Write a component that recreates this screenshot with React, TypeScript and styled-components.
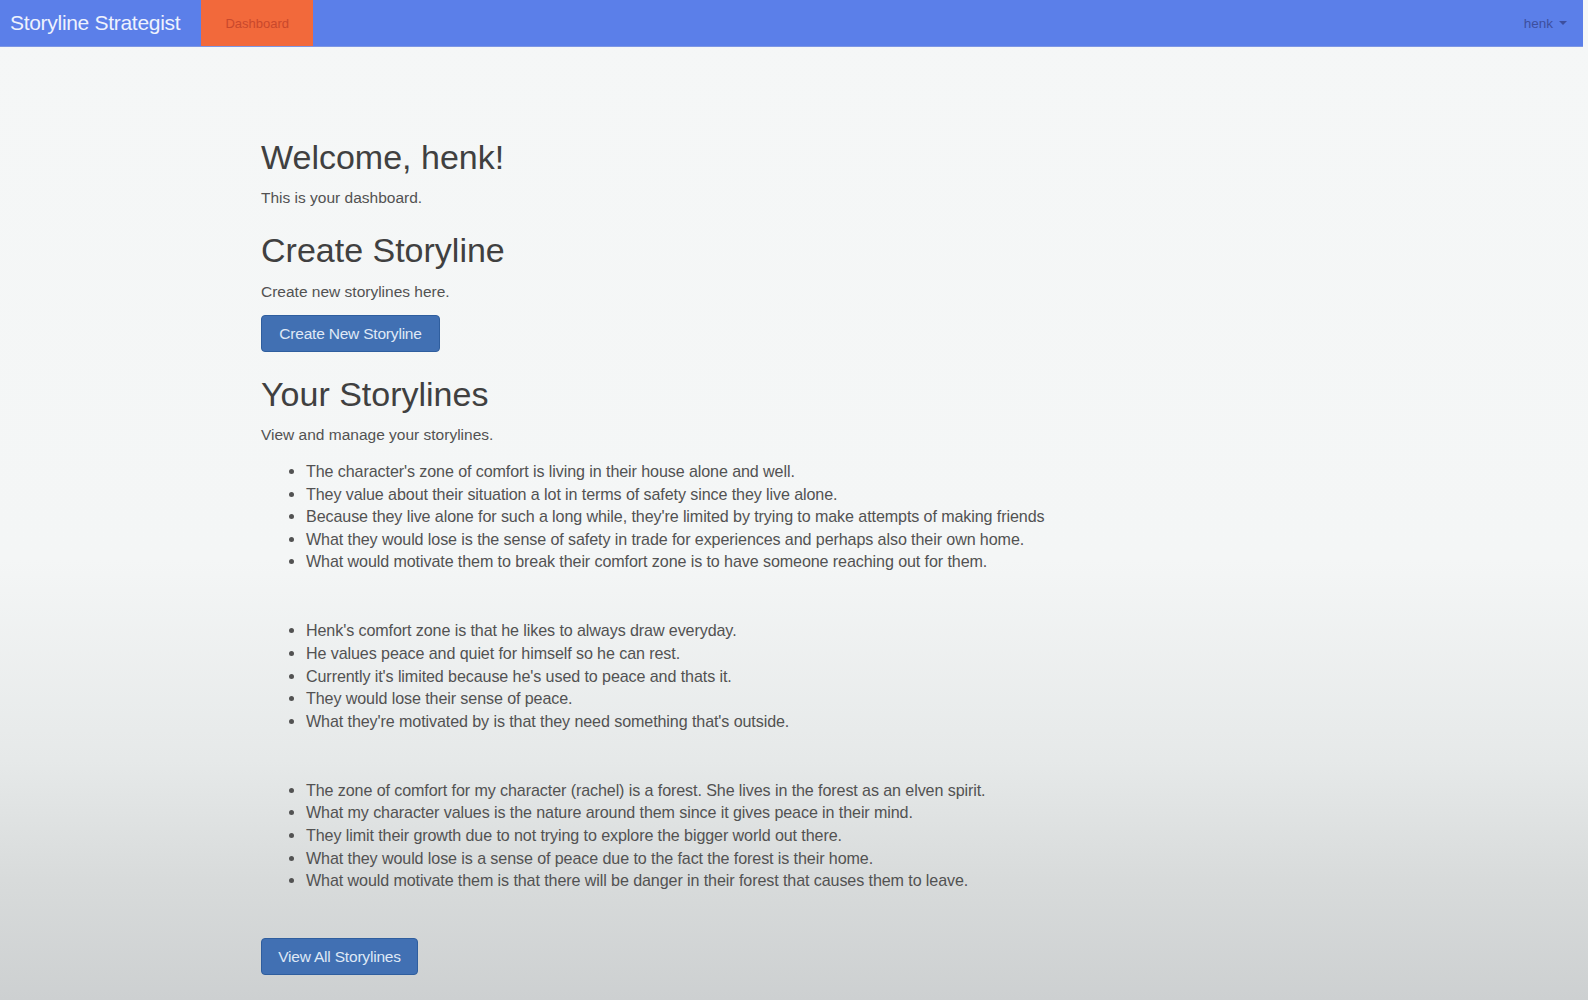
import React from "react";
import styled, { createGlobalStyle } from "styled-components";

const GlobalStyle = createGlobalStyle`
  html, body {
    margin: 0;
    padding: 0;
  }
  body {
    font-family: "Liberation Sans", Arial, sans-serif;
    background: linear-gradient(
      to bottom,
      #f5f7f7 0px,
      #f4f6f6 560px,
      #e6e9e9 760px,
      #d8dbdb 880px,
      #cdd0d1 1000px
    );
    min-height: 1000px;
    color: #505050;
  }
`;

const Navbar = styled.nav`
  display: flex;
  align-items: stretch;
  height: 46px;
  margin-right: 5px;
  background: #5b7fe9;
  border-bottom: 1px solid #7d97e4;
`;

const Brand = styled.a`
  display: flex;
  align-items: center;
  padding: 0 21px 0 10px;
  font-size: 21px;
  color: #eef2fd;
  letter-spacing: -0.3px;
  text-decoration: none;
`;

const NavTab = styled.a<{ $active?: boolean }>`
  display: flex;
  align-items: center;
  justify-content: center;
  width: 112px;
  font-size: 13px;
  color: ${(p) => (p.$active ? "#c9482c" : "#e9eefc")};
  background: ${(p) => (p.$active ? "#f2693b" : "transparent")};
  text-decoration: none;
`;

const Spacer = styled.div`
  flex: 1;
`;

const UserMenu = styled.a`
  display: flex;
  align-items: center;
  gap: 6px;
  padding: 0 16px 0 0;
  font-size: 13.5px;
  color: #3d4f9e;
  text-decoration: none;
`;

const Caret = styled.span`
  display: inline-block;
  width: 0;
  height: 0;
  border-left: 4px solid transparent;
  border-right: 4px solid transparent;
  border-top: 4px solid #3d4f9e;
`;

const Main = styled.main`
  padding: 69px 0 24px 261px;
`;

const Heading = styled.h2`
  margin: 22.6px 0 11.3px;
  font-size: 34px;
  font-weight: 400;
  line-height: 1.1;
  color: #404040;
`;

const Lead = styled.p`
  margin: 0 0 11.3px;
  font-size: 15.5px;
  line-height: 22.6px;
  color: #525252;
`;

const Button = styled.button`
  display: inline-block;
  height: 37px;
  padding: 0 13px;
  margin: 0;
  font-family: inherit;
  font-size: 15.5px;
  letter-spacing: -0.2px;
  color: #dfe8f6;
  background: #4170b3;
  border: 1px solid #2f5e9e;
  border-radius: 4px;
  cursor: pointer;
`;

const CreateButton = styled(Button)`
  width: 179px;
  margin-bottom: 1px;
`;

const ViewButton = styled(Button)`
  width: 157px;
`;

const StoryList = styled.ul`
  margin: 13px 0 46.5px;
  padding-left: 45px;
  font-size: 16.1px;
  line-height: 22.6px;
  letter-spacing: -0.1px;
  color: #525252;
`;

const storylines: string[][] = [
  [
    "The character's zone of comfort is living in their house alone and well.",
    "They value about their situation a lot in terms of safety since they live alone.",
    "Because they live alone for such a long while, they're limited by trying to make attempts of making friends",
    "What they would lose is the sense of safety in trade for experiences and perhaps also their own home.",
    "What would motivate them to break their comfort zone is to have someone reaching out for them.",
  ],
  [
    "Henk's comfort zone is that he likes to always draw everyday.",
    "He values peace and quiet for himself so he can rest.",
    "Currently it's limited because he's used to peace and thats it.",
    "They would lose their sense of peace.",
    "What they're motivated by is that they need something that's outside.",
  ],
  [
    "The zone of comfort for my character (rachel) is a forest. She lives in the forest as an elven spirit.",
    "What my character values is the nature around them since it gives peace in their mind.",
    "They limit their growth due to not trying to explore the bigger world out there.",
    "What they would lose is a sense of peace due to the fact the forest is their home.",
    "What would motivate them is that there will be danger in their forest that causes them to leave.",
  ],
];

export default function App() {
  return (
    <>
      <GlobalStyle />
      <Navbar>
        <Brand href="#">Storyline Strategist</Brand>
        <NavTab href="#" $active>
          Dashboard
        </NavTab>
        <Spacer />
        <UserMenu href="#">
          henk <Caret />
        </UserMenu>
      </Navbar>
      <Main>
        <Heading>Welcome, henk!</Heading>
        <Lead>This is your dashboard.</Lead>
        <Heading>Create Storyline</Heading>
        <Lead>Create new storylines here.</Lead>
        <CreateButton>Create New Storyline</CreateButton>
        <Heading>Your Storylines</Heading>
        <Lead>View and manage your storylines.</Lead>
        {storylines.map((items, i) => (
          <StoryList key={i}>
            {items.map((text) => (
              <li key={text}>{text}</li>
            ))}
          </StoryList>
        ))}
        <ViewButton>View All Storylines</ViewButton>
      </Main>
    </>
  );
}
